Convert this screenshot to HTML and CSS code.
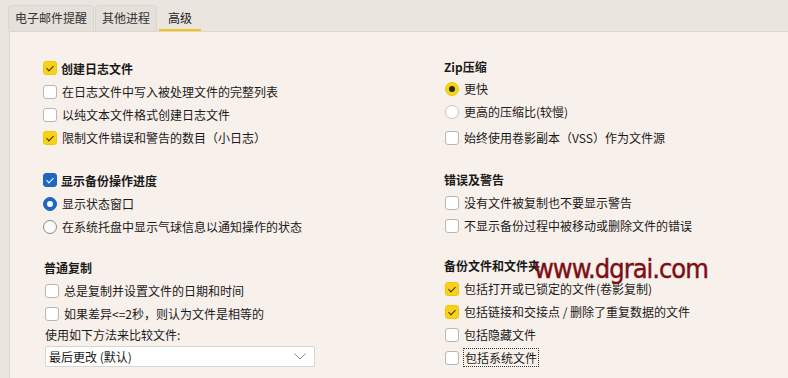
FILE: index.html
```html
<!DOCTYPE html>
<html lang="zh-CN">
<head>
<meta charset="utf-8">
<title>高级</title>
<link rel="stylesheet" href="styles.css">
</head>
<body>
<div class="tabs">
  <div class="tab">电子邮件提醒</div>
  <div class="tab">其他进程</div>
  <div class="tab active">高级</div>
</div>
<div class="panel">
  <div class="col left">
    <div class="group g1">
      <div class="row title"><span class="cb on"></span>创建日志文件</div>
      <div class="row"><span class="cb"></span>在日志文件中写入被处理文件的完整列表</div>
      <div class="row"><span class="cb"></span>以纯文本文件格式创建日志文件</div>
      <div class="row"><span class="cb on"></span>限制文件错误和警告的数目（小日志）</div>
    </div>
    <div class="group g2">
      <div class="row title"><span class="cb blue"></span>显示备份操作进度</div>
      <div class="row"><span class="rb bsel"></span>显示状态窗口</div>
      <div class="row"><span class="rb"></span>在系统托盘中显示气球信息以通知操作的状态</div>
    </div>
    <div class="group g3">
      <div class="row title plain">普通复制</div>
      <div class="row ind"><span class="cb"></span>总是复制并设置文件的日期和时间</div>
      <div class="row ind"><span class="cb"></span>如果差异&lt;=2秒，则认为文件是相等的</div>
      <div class="label">使用如下方法来比较文件:</div>
      <div class="select"><span>最后更改 (默认)</span>
        <svg class="chev" width="12" height="7" viewBox="0 0 12 7"><path d="M0.5 0.5 L6 6 L11.5 0.5" fill="none" stroke="#8a8a8a" stroke-width="1"/></svg>
      </div>
    </div>
  </div>
  <div class="col right">
    <div class="group r1">
      <div class="row title plain">Zip压缩</div>
      <div class="row ind"><span class="rb ysel"></span>更快</div>
      <div class="row ind"><span class="rb"></span>更高的压缩比(较慢)</div>
      <div class="row ind gap"><span class="cb"></span>始终使用卷影副本（VSS）作为文件源</div>
    </div>
    <div class="group r2">
      <div class="row title plain">错误及警告</div>
      <div class="row ind"><span class="cb"></span>没有文件被复制也不要显示警告</div>
      <div class="row ind"><span class="cb"></span>不显示备份过程中被移动或删除文件的错误</div>
    </div>
    <div class="group r3">
      <div class="row title plain">备份文件和文件夹</div>
      <div class="row ind"><span class="cb on"></span>包括打开或已锁定的文件(卷影复制)</div>
      <div class="row ind"><span class="cb on"></span>包括链接和交接点 / 删除了重复数据的文件</div>
      <div class="row ind"><span class="cb"></span>包括隐藏文件</div>
      <div class="row ind"><span class="cb"></span><span class="focus">包括系统文件</span></div>
    </div>
  </div>
</div>
<div class="watermark">www.dgrai.com</div>
</body>
</html>
```

FILE: styles.css
```css
* { box-sizing: border-box; }
html, body { margin: 0; padding: 0; }
body {
  width: 788px;
  height: 378px;
  overflow: hidden;
  background: #ebe5e0;
  font-family: "Microsoft YaHei UI", "Noto Sans CJK SC", "Noto Sans", sans-serif;
  font-size: 12px;
  color: #1a1a1a;
  position: relative;
}
.tabs {
  display: flex;
  height: 31px;
  padding: 5px 0 0 8px;
  gap: 1px;
}
.tab {
  height: 26px;
  line-height: 24px;
  padding: 0 6px;
  background: #e6e0db;
  border: 1px solid #dcd6d1;
  border-bottom: none;
  border-radius: 4px 4px 0 0;
  color: #333;
  font-size: 12px;
}
.tab.active {
  background: transparent;
  border-color: transparent;
  padding: 0 9px;
  box-shadow: inset 0 -2px 0 #f5c518;
  color: #1a1a1a;
}
.panel {
  margin-left: 9px;
  height: 347px;
  background: #f7f0eb;
  border-top: 1px solid #ddd6d0;
  border-left: 1px solid #ddd6d0;
  display: grid;
  grid-template-columns: 400px 1fr;
  padding: 24px 0 0 33px;
}
.col { display: flex; flex-direction: column; }
.row {
  display: flex;
  align-items: center;
  height: 23px;
  gap: 5px;
  white-space: nowrap;
}
.row.title { font-weight: bold; height: 24px; gap: 4px; }
.row.title.plain { padding-left: 1px; }
.row.ind { padding-left: 2px; }
.group.g2 { margin-top: 19px; }
.group.g3 { margin-top: 17px; }
.right .group.r1 { margin-top: -1px; }
.right .group.r1 .row.title { height: 22px; }
.right .row.gap { margin-top: 3px; }
.right .group.r2 { margin-top: 19px; }
.right .group.r2 .row.title { height: 23px; }
.right .group.r3 { margin-top: 17px; }
.right .group.r3 .row.title { height: 23px; }
.cb {
  width: 14px; height: 14px;
  flex: none;
  border: 1px solid #b9b6b3;
  border-radius: 3px;
  background: #fff;
  position: relative;
}
.cb.on { background: #f8d21a; border-color: #f0c800; }
.cb.on::after, .cb.blue::after {
  content: "";
  position: absolute;
  left: 4px; top: 2px;
  width: 3px; height: 6px;
  border-right: 1.2px solid #3a3000;
  border-bottom: 1.2px solid #3a3000;
  transform: rotate(45deg);
}
.cb.blue { background: #1e66bf; border-color: #1e66bf; }
.cb.blue::after { border-color: #fff; border-right-width: 1px; border-bottom-width: 1px; }
.rb {
  width: 14px; height: 14px;
  flex: none;
  border: 1px solid #8a8a8a;
  border-radius: 50%;
  background: #fbfbfb;
  position: relative;
}
.right .rb { border-color: #c6c6c6; background: #fff; }
.rb.bsel { background: #1e66bf; border-color: #1e66bf; }
.rb.bsel::after {
  content: ""; position: absolute; left: 3px; top: 3px;
  width: 6px; height: 6px; border-radius: 50%; background: #fff;
}
.right .rb.ysel { background: #f8d21a; border-color: #f0c800; }
.rb.ysel::after {
  content: ""; position: absolute; left: 3px; top: 3px;
  width: 6px; height: 6px; border-radius: 50%; background: #2a2410;
}
.label { height: 20px; line-height: 20px; padding-left: 2px; }
.select {
  margin-top: 1px;
  margin-left: 2px;
  width: 270px;
  height: 21px;
  background: #fff;
  border: 1px solid #d8d4d0;
  border-radius: 2px;
  display: flex;
  align-items: center;
  justify-content: space-between;
  padding: 0 8px 0 3px;
}
.focus { outline: 1px dotted #333; outline-offset: 0; padding: 0 1px; }
.watermark {
  position: absolute;
  left: 534px;
  top: 256px;
  font-family: "DejaVu Sans Condensed", "DejaVu Sans", sans-serif;
  font-stretch: condensed;
  font-size: 27px;
  line-height: 26px;
  color: #7d0d14;
  letter-spacing: -1px;
  white-space: nowrap;
  -webkit-text-stroke: 0.4px #7d0d14;
}
```
